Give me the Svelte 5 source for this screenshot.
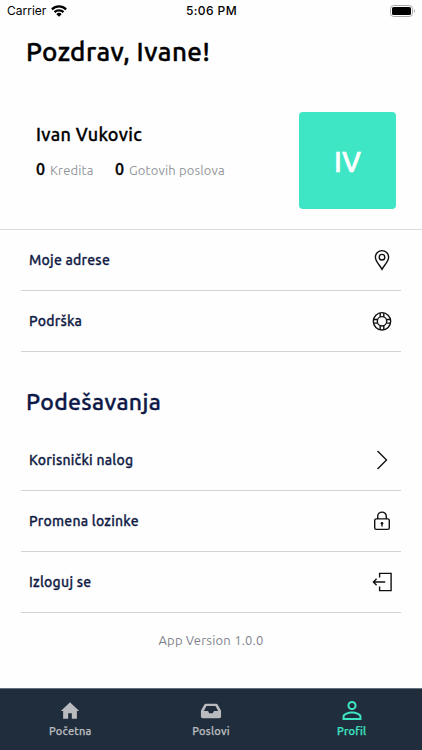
<script lang="ts">
  interface MenuItem {
    id: string;
    label: string;
    icon: string;
  }

  const userName = 'Ivan Vukovic';
  const initials = 'IV';
  const credits = 0;
  const finishedJobs = 0;

  const accountItems: MenuItem[] = [
    { id: 'addresses', label: 'Moje adrese', icon: 'pin' },
    { id: 'support', label: 'Podrška', icon: 'support' }
  ];

  const settingsItems: MenuItem[] = [
    { id: 'account', label: 'Korisnički nalog', icon: 'chevron' },
    { id: 'password', label: 'Promena lozinke', icon: 'lock' },
    { id: 'logout', label: 'Izloguj se', icon: 'logout' }
  ];

  const tabs: MenuItem[] = [
    { id: 'home', label: 'Početna', icon: 'home' },
    { id: 'jobs', label: 'Poslovi', icon: 'inbox' },
    { id: 'profile', label: 'Profil', icon: 'person' }
  ];

  let activeTab = $state('profile');
</script>

{#snippet menuRow(item: MenuItem)}
  <button class="row">
    <span>{item.label}</span>
    <svg class="row-icon" viewBox="0 0 22 22">
      {#if item.icon === 'pin'}
        <path d="M11 20.300C9 16.600 4.400 12.200 4.400 8.200a6.600 6.600 0 0 1 13.200 0c0 4-4.600 8.400-6.600 12.100Z" />
        <circle cx="11" cy="8.2" r="2.8" />
      {:else if item.icon === 'support'}
        <circle cx="11" cy="11.3" r="8.7" />
        <circle cx="11" cy="11.3" r="4.7" />
        <path d="M9.200 2.700v4.200M12.800 2.700v4.200M9.200 15.700v4.200M12.800 15.700v4.200M2.400 9.500h4.200M2.400 13.100h4.200M15.400 9.500h4.200M15.400 13.100h4.200" />
      {:else if item.icon === 'chevron'}
        <path d="M6.500 2l9 9-9 9" />
      {:else if item.icon === 'lock'}
        <rect x="3.7" y="8.9" width="14.6" height="10.5" rx="1.6" />
        <path d="M6.700 8.900V6.400a4.300 4.300 0 0 1 8.600 0v2.500" />
        <path d="M11 13.400v3" />
        <circle class="solid" cx="11" cy="13.2" r="1.3" />
      {:else if item.icon === 'logout'}
        <path d="M8.600 6.500V2.400h11.500v17.200H8.600V15.500M14.200 11H2.400M5.600 7.800L2.400 11l3.200 3.200" />
      {/if}
    </svg>
  </button>
{/snippet}

<div class="screen">
  <div class="status-bar">
    <div class="carrier">
      <span>Carrier</span>
      <svg class="wifi" viewBox="0 0 16 12">
        <path d="M0.900 4.300a10.200 10.200 0 0 1 14.200 0" />
        <path d="M3.500 7.100a6.500 6.500 0 0 1 9 0" />
        <path class="dot" d="M8 11.800L5.300 9.200a3.800 3.800 0 0 1 5.400 0Z" />
      </svg>
    </div>
    <span class="time">5:06 PM</span>
    <svg class="battery" viewBox="0 0 26 12">
      <rect class="shell" x="0.5" y="0.5" width="22" height="11" rx="3.2" />
      <rect x="2" y="2" width="19" height="8" rx="1.6" />
      <path class="cap" d="M24 4.200c1.400.500 1.400 3.100 0 3.600Z" />
    </svg>
  </div>

  <h1>Pozdrav, Ivane!</h1>

  <section class="profile">
    <div>
      <h2 class="name">{userName}</h2>
      <div class="stats">
        <b>{credits}</b>
        <span class="credits-label">Kredita</span>
        <b>{finishedJobs}</b>
        <span>Gotovih poslova</span>
      </div>
    </div>
    <div class="avatar">{initials}</div>
  </section>

  <div class="menu">
    {#each accountItems as item (item.id)}
      {@render menuRow(item)}
    {/each}
  </div>

  <h2 class="section-title">Podešavanja</h2>

  <div class="menu">
    {#each settingsItems as item (item.id)}
      {@render menuRow(item)}
    {/each}
  </div>

  <p class="version">App Version 1.0.0</p>

  <nav>
    {#each tabs as tab (tab.id)}
      <button class="tab" class:active={activeTab === tab.id} onclick={() => (activeTab = tab.id)}>
        <svg viewBox="0 0 24 24">
          {#if tab.icon === 'home'}
            <path d="M10 20.500v-6h4v6h5.500V12H22L12 2.500 2 12h2.500v8.500z" />
          {:else if tab.icon === 'inbox'}
            <path fill-rule="evenodd" d="M6.500 4h11c.8 0 1.500.4 1.900 1.100L22.600 11c.3.5.4 1 .4 1.500V18a2 2 0 0 1-2 2H3a2 2 0 0 1-2-2v-5.500c0-.5.1-1 .4-1.500l3.200-5.900C5 4.400 5.700 4 6.500 4Zm.6 2.500L4.200 12h4.600l1.200 2.500h4l1.200-2.500h4.600l-2.900-5.500Z" />
          {:else}
            <path fill-rule="evenodd" d="M12 1a5 5 0 1 1 0 10 5 5 0 0 1 0-10Zm0 2.200a2.800 2.800 0 1 0 0 5.600 2.800 2.800 0 0 0 0-5.600ZM12 12.500c3.700 0 10.300 1.800 10.300 5.500V21.800H1.700V18C1.700 14.300 8.300 12.500 12 12.500Zm0 2.200c-3.500 0-8.100 1.700-8.100 3.300v1.600h16.200V18c0-1.600-4.600-3.300-8.100-3.300Z" />
          {/if}
        </svg>
        <span>{tab.label}</span>
      </button>
    {/each}
  </nav>
</div>

<style>
  :global(body) {
    background: #fff;
  }

  .screen {
    display: flex;
    flex-direction: column;
    box-sizing: border-box;
    height: 750px;
    background: #fefefe;
    color: #000;
    font-family: Ubuntu, 'Noto Sans', 'Open Sans', sans-serif;
  }

  h1,
  h2,
  p {
    margin: 0;
    font-weight: 500;
  }

  button {
    padding: 0;
    border: 0;
    background: none;
    font: inherit;
    cursor: pointer;
  }

  .status-bar {
    display: grid;
    grid-template-columns: 1fr auto 1fr;
    align-items: center;
    height: 22px;
    padding: 0 6px 0 7px;
    font: 12px/22px Inter, sans-serif;
  }

  .carrier {
    display: flex;
    align-items: center;
    gap: 5px;
  }

  .wifi {
    width: 16px;
    height: 12px;
    margin-top: -1px;
    fill: none;
    stroke: #000;
    stroke-width: 2.3;
  }

  .wifi .dot {
    fill: #000;
    stroke: none;
  }

  .time {
    font-weight: 500;
    letter-spacing: 0.4px;
  }

  .battery {
    justify-self: end;
    width: 26px;
    height: 12px;
    margin-top: -1px;
  }

  .shell {
    fill: none;
    stroke: #a8a8a8;
  }

  .cap {
    fill: #a8a8a8;
  }

  h1 {
    height: 60px;
    padding-left: 26px;
    font-size: 26px;
    line-height: 60px;
    letter-spacing: 0.45px;
    -webkit-text-stroke: 0.4px;
  }

  .profile {
    display: flex;
    justify-content: space-between;
    box-sizing: border-box;
    height: 148px;
    padding: 30px 26px 0 36px;
    border-bottom: 1px solid #dcdcdc;
  }

  .name {
    padding: 9px 0 1px;
    font-size: 18px;
    line-height: 26px;
    letter-spacing: 0.33px;
    -webkit-text-stroke: 0.3px;
  }

  .stats {
    display: flex;
    align-items: baseline;
    margin-top: 8px;
    font-size: 13px;
    line-height: 26px;
    letter-spacing: 0.15px;
    color: #93969c;
  }

  .stats b {
    width: 14px;
    color: #000;
    font-size: 16px;
    font-weight: 500;
    -webkit-text-stroke: 0.4px;
  }

  .credits-label {
    width: 65px;
  }

  .avatar {
    width: 97px;
    height: 97px;
    border-radius: 4px;
    background: #3fe6c5;
    color: #fff;
    font-size: 28.5px;
    font-weight: 500;
    line-height: 98px;
    text-align: center;
    -webkit-text-stroke: 0.6px;
  }

  .menu {
    display: flex;
    flex-direction: column;
    padding: 0 21px;
  }

  .row {
    display: flex;
    align-items: center;
    justify-content: space-between;
    box-sizing: border-box;
    height: 61px;
    padding: 0 8px;
    border-bottom: 1px solid #d2d2d2;
    color: #121c46;
    font-size: 14px;
    font-weight: 500;
    letter-spacing: 0.23px;
    -webkit-text-stroke: 0.3px;
  }

  .row-icon {
    width: 22px;
    height: 22px;
    fill: none;
    stroke: #111;
    stroke-width: 1.4;
  }

  .row-icon .solid {
    fill: #111;
    stroke: none;
  }

  .section-title {
    height: 78px;
    padding-left: 26px;
    color: #0d1847;
    font-size: 23px;
    line-height: 100px;
    letter-spacing: 0.35px;
    -webkit-text-stroke: 0.35px;
  }

  .version {
    padding-top: 16px;
    color: #7e838d;
    font-size: 13px;
    line-height: 22px;
    letter-spacing: 0.2px;
    text-align: center;
    font-weight: 400;
  }

  nav {
    display: grid;
    grid-template-columns: repeat(3, 1fr);
    box-sizing: border-box;
    height: 62px;
    margin-top: auto;
    border-top: 1px solid #65717d;
    background: #1f2d3d;
  }

  .tab {
    display: flex;
    flex-direction: column;
    align-items: center;
    padding-top: 11px;
    color: #b9bbbe;
    font-size: 11px;
    font-weight: 500;
    line-height: 16px;
    letter-spacing: 0.22px;
    -webkit-text-stroke: 0.25px;
  }

  .tab svg {
    width: 22px;
    height: 22px;
    margin-bottom: 1px;
    fill: currentColor;
  }

  .tab.active {
    color: #3fe6c5;
  }
</style>
